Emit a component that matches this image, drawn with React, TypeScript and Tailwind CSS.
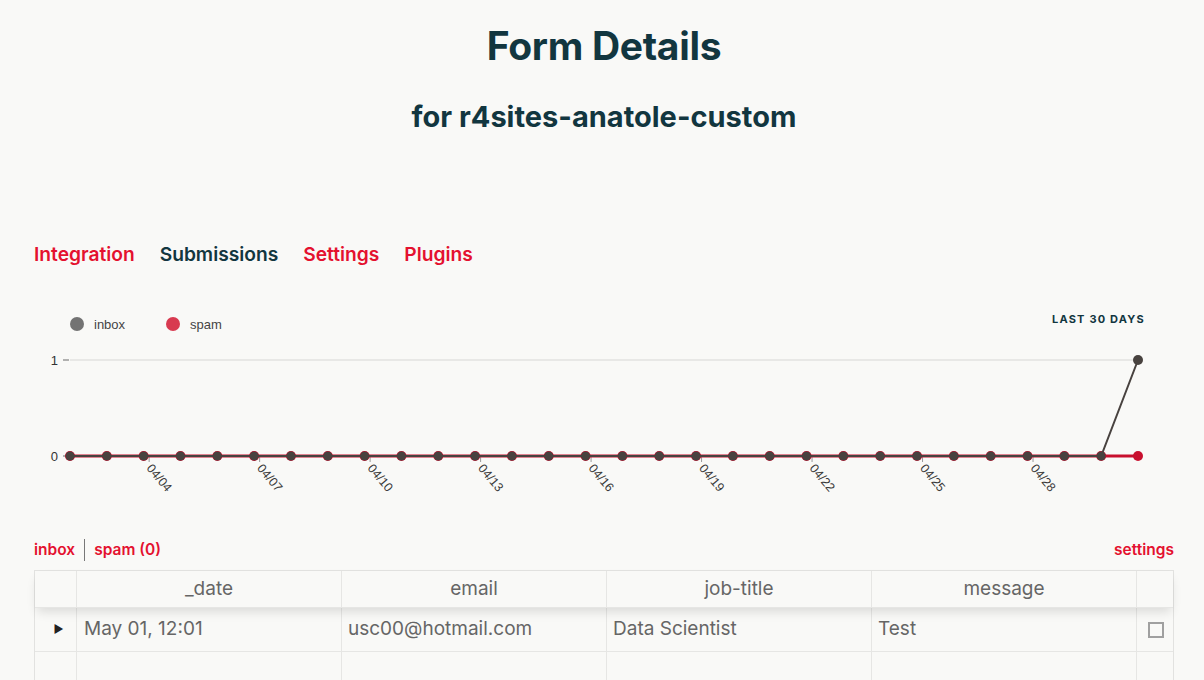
import React from "react";

const RED = "#e4112f";
const TEAL = "#12363f";

function Chart() {
  const n = 30;
  const x0 = 36;
  const step = (1104 - 36) / (n - 1);
  const xs = Array.from({ length: n }, (_, i) => x0 + i * step);
  const y0 = 156;
  const y1 = 60;
  const inboxY = xs.map((_, i) => (i === n - 1 ? y1 : y0));
  const labels = ["04/04", "04/07", "04/10", "04/13", "04/16", "04/19", "04/22", "04/25", "04/28"];
  const ticks = labels.map((l, k) => ({ l, x: xs[2 + k * 3] + 5.5 }));
  const inboxPath = xs.map((x, i) => `${i === 0 ? "M" : "L"}${x},${inboxY[i]}`).join(" ");
  return (
    <svg width={1140} height={220} className="block" style={{ fontFamily: "'Liberation Sans', Arial, sans-serif" }}>
      <circle cx={43} cy={24} r={7} fill="#737373" />
      <text x={60} y={28.5} fontSize={13} fill="#444">inbox</text>
      <circle cx={139} cy={24} r={7} fill="#d83a50" />
      <text x={156} y={28.5} fontSize={13} fill="#444">spam</text>
      <text x={1111} y={23} fontSize={11} fontWeight={700} fill={TEAL} textAnchor="end" letterSpacing={1.2} style={{ fontFamily: "Inter, sans-serif" }}>LAST 30 DAYS</text>
      <line x1={36} x2={1104} y1={y1} y2={y1} stroke="#e2e2e0" strokeWidth={1.5} />
      <line x1={29} x2={35} y1={y1} y2={y1} stroke="#999" strokeWidth={1.5} />
      <line x1={29} x2={35} y1={y0} y2={y0} stroke="#999" strokeWidth={1.5} />
      <text x={24} y={y1 + 4.5} fontSize={13} fill="#333" textAnchor="end">1</text>
      <text x={24} y={y0 + 4.5} fontSize={13} fill="#333" textAnchor="end">0</text>
      {ticks.map((t) => (
        <g key={t.l}>
          <line x1={t.x} x2={t.x} y1={y0} y2={y0 + 6} stroke="#999" strokeWidth={1} />
          <text transform={`translate(${t.x},${y0 + 10}) rotate(50)`} x={0} y={4} fontSize={12.5} fill="#3a3a3a">{t.l}</text>
        </g>
      ))}
      <line x1={xs[0]} x2={xs[n - 1]} y1={y0} y2={y0} stroke="#c8102e" strokeWidth={3} />
      {xs.map((x, i) => (
        <circle key={"s" + i} cx={x} cy={y0} r={5} fill="#c8102e" />
      ))}
      <path d={inboxPath} fill="none" stroke="#48423f" strokeWidth={2} />
      {xs.map((x, i) => (
        <circle key={"i" + i} cx={x} cy={inboxY[i]} r={i === n - 1 ? 5 : 4.5} fill="#48423f" />
      ))}
    </svg>
  );
}

export default function App() {
  const cols = "grid grid-cols-[42px_265px_265px_265px_265px_37px]";
  const cell = "border-r border-[#e6e6e4]";
  return (
    <div className="min-h-[680px] w-[1204px] bg-[#f9f9f7] pl-[34px] pr-[30px]" style={{ fontFamily: "Inter, 'Noto Sans', sans-serif" }}>
      <div className="flex flex-col items-center pt-[23px]">
        <h1 className="text-[39px] font-bold leading-[46px] tracking-[-0.3px]" style={{ color: TEAL }}>Form Details</h1>
        <h2 className="mt-[30px] text-[29px] font-bold leading-[36px]" style={{ color: TEAL }}>for r4sites-anatole-custom</h2>
      </div>
      <nav className="mt-[107px] flex gap-[25px] text-[19.2px] font-semibold leading-[24px]">
        <span style={{ color: RED }}>Integration</span>
        <span style={{ color: TEAL }}>Submissions</span>
        <span style={{ color: RED }}>Settings</span>
        <span style={{ color: RED }}>Plugins</span>
      </nav>
      <div className="mt-[34px]">
        <Chart />
      </div>
      <div className="mt-[19px] flex items-center justify-between text-[15.5px] font-semibold leading-[20px]" style={{ color: RED }}>
        <div className="flex items-center">
          <span>inbox</span>
          <span className="mx-[9px] h-[22px] w-px bg-[#777]" />
          <span>spam (0)</span>
        </div>
        <span>settings</span>
      </div>
      <div className="mt-[9px] border-l border-r border-t border-[#e2e2e0] text-[19px] text-[#666]">
        <div className={`${cols} relative z-10 h-[37px] border-b border-[#e6e6e4] shadow-[0_6px_10px_-2px_rgba(0,0,0,0.12)]`}>
          <div className={cell} />
          <div className={`${cell} flex items-center justify-center`}>_date</div>
          <div className={`${cell} flex items-center justify-center`}>email</div>
          <div className={`${cell} flex items-center justify-center`}>job-title</div>
          <div className={`${cell} flex items-center justify-center`}>message</div>
          <div />
        </div>
        <div className={`${cols} h-[44px] border-b border-[#e6e6e4]`}>
          <div className={`${cell} flex items-center justify-center pl-[6px] text-[11px] text-[#222]`}>▶</div>
          <div className={`${cell} flex items-center pl-[7px]`}>May 01, 12:01</div>
          <div className={`${cell} flex items-center pl-[6px]`}>usc00@hotmail.com</div>
          <div className={`${cell} flex items-center pl-[6px]`}>Data Scientist</div>
          <div className={`${cell} flex items-center pl-[6px]`}>Test</div>
          <div className="flex items-center justify-center">
            <span className="h-[16px] w-[16px] border-2 border-[#a0a0a0]" />
          </div>
        </div>
        <div className={`${cols} h-[44px]`}>
          <div className={cell} />
          <div className={cell} />
          <div className={cell} />
          <div className={cell} />
          <div className={cell} />
          <div />
        </div>
      </div>
    </div>
  );
}
